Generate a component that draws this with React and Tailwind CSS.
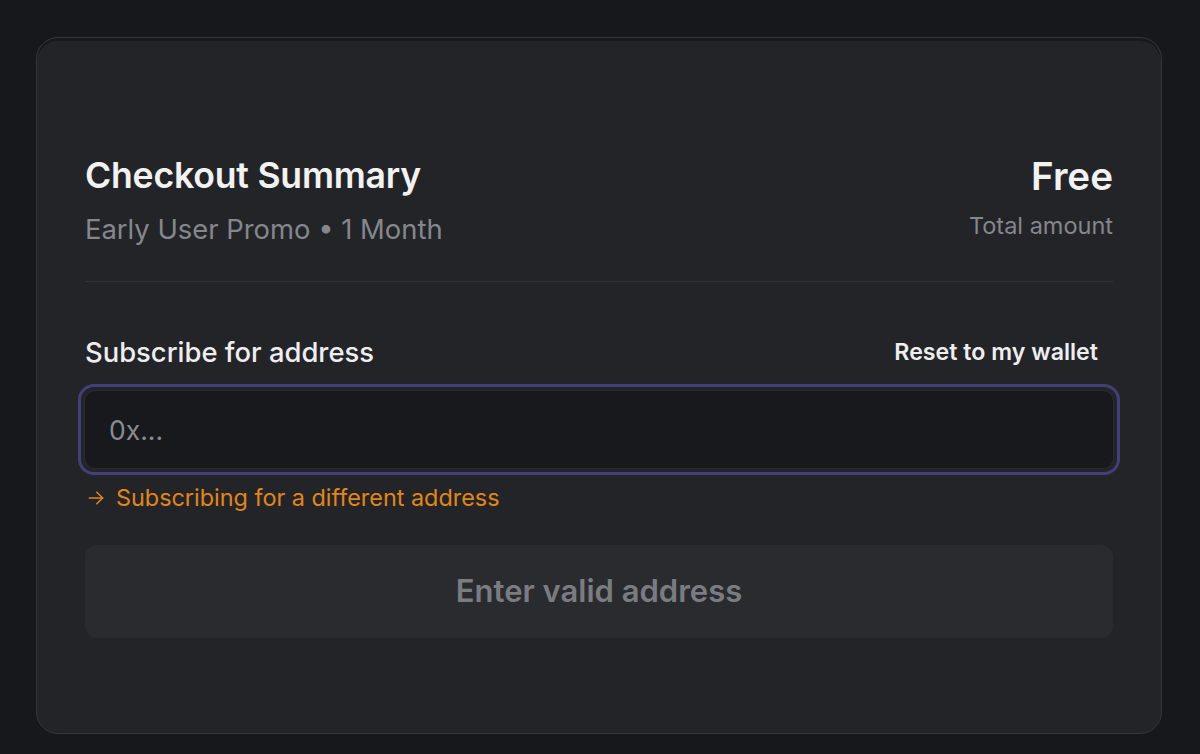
import React from 'react';

const font = { fontFamily: 'Inter, "Noto Sans", sans-serif' };

const CheckoutSummary = () => {
  return (
    <div className="min-h-screen bg-[#16181b] pt-[37px] pl-[36px] pr-[38px]" style={font}>
      <div className="h-[697px] rounded-[22px] border border-[#36373b] bg-[#232428] shadow-[inset_0_3px_0_#18191b] px-[48px] pt-[117px]">
        <div className="flex justify-between items-start">
          <div>
            <h1 className="text-[35.6px] leading-[42px] font-semibold text-[#f2f2f3] tracking-[-0.2px]">Checkout Summary</h1>
            <p className="mt-[16px] text-[27.4px] leading-[32px] text-[#85878d]">Early User Promo • 1 Month</p>
          </div>
          <div className="text-right">
            <div className="text-[38.6px] leading-[42px] font-semibold text-[#f2f2f3]">Free</div>
            <div className="mt-[15px] text-[23.5px] leading-[28px] text-[#85878d]">Total amount</div>
          </div>
        </div>

        <div className="mt-[36px] h-px bg-[#323337]" />

        <div className="mt-[54px] flex justify-between items-center pr-[15px]">
          <label className="text-[27.4px] leading-[32px] font-medium text-[#eeeef0]">Subscribe for address</label>
          <button className="text-[23.2px] leading-[28px] font-semibold text-[#eeeef0]">Reset to my wallet</button>
        </div>

        <div className="mt-[16px] -mx-[7px] rounded-[16px] border-[3px] border-[#42407a] p-[3px]">
          <input
            className="w-full h-[79px] rounded-[11px] border border-[#2b2c30] bg-[#18191c] px-[24px] text-[26.5px] text-[#e5e5e7] placeholder:text-[#8a8b90] outline-none"
            placeholder="0x..."
          />
        </div>

        <div className="mt-[8px] flex items-center gap-[10px] text-[23.4px] leading-[30px] text-[#e0861c]">
          <svg width="20" height="20" viewBox="0 0 24 24" fill="none" stroke="currentColor" strokeWidth="1.8" strokeLinecap="round" strokeLinejoin="round" className="ml-[1px]">
            <path d="M4 12h16" />
            <path d="M13 5l7 7-7 7" />
          </svg>
          <span>Subscribing for a different address</span>
        </div>

        <button className="mt-[32px] w-full h-[93px] rounded-[12px] bg-[#2a2b2f] text-[31px] font-semibold text-[#7b7c81]">
          Enter valid address
        </button>
      </div>
    </div>
  );
};

export default CheckoutSummary;
